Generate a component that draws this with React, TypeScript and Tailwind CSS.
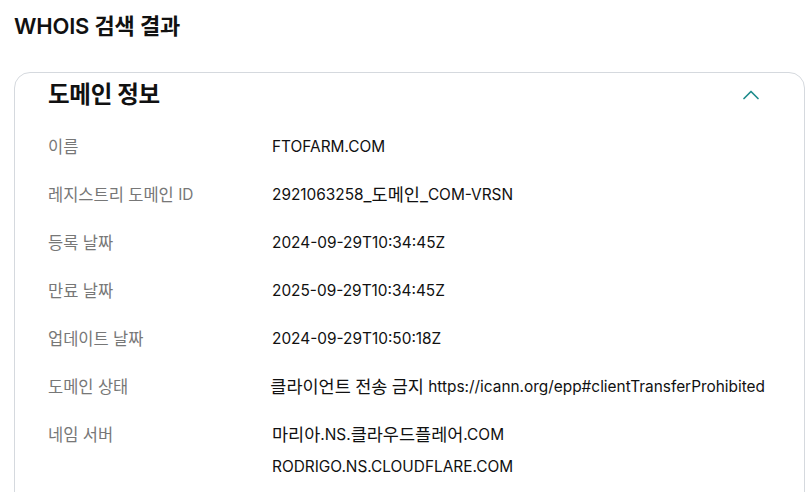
import { ChevronUp } from "lucide-react";

const rows: { label: string; values: string[] }[] = [
  { label: "이름", values: ["FTOFARM.COM"] },
  { label: "레지스트리 도메인 ID", values: ["2921063258_도메인_COM-VRSN"] },
  { label: "등록 날짜", values: ["2024-09-29T10:34:45Z"] },
  { label: "만료 날짜", values: ["2025-09-29T10:34:45Z"] },
  { label: "업데이트 날짜", values: ["2024-09-29T10:50:18Z"] },
  {
    label: "도메인 상태",
    values: ["클라이언트 전송 금지 https://icann.org/epp#clientTransferProhibited"],
  },
  {
    label: "네임 서버",
    values: ["마리아.NS.클라우드플레어.COM", "RODRIGO.NS.CLOUDFLARE.COM"],
  },
];

// hangul runs (and underscores) get a bigger size than the latin text around them
function Mixed({ text, big }: { text: string; big: string }) {
  return (
    <>
      {text.split(/([\u3131-\uD79D_]+)/).map((part, i) =>
        /[\u3131-\uD79D_]/.test(part) ? (
          <span key={i} className={big}>
            {part}
          </span>
        ) : (
          <span key={i}>{part}</span>
        )
      )}
    </>
  );
}

export default function App() {
  return (
    <div className="w-[811px] h-[492px] overflow-hidden bg-white font-['Inter','Noto_Sans_CJK_KR',sans-serif] text-[#111]">
      <h1 className="pl-[14px] pt-[11px] h-[40px] text-[22px] font-semibold leading-[30px] tracking-[-0.2px]">
        WHOIS 검색 결과
      </h1>

      <div className="mt-[32px] ml-[14px] mr-[6px] border border-[#d5d9de] rounded-[16px] pl-[33px] pr-[39px] pb-10">
        {/* Header */}
        <div className="h-[44px] flex items-center justify-between">
          <h2 className="text-[23.5px] font-bold tracking-[-0.3px]">도메인 정보</h2>
          <ChevronUp size={28} strokeWidth={1.5} className="text-[#1f8c8c]" />
        </div>

        {/* Rows */}
        <div className="mt-[6px]">
          {rows.map((row) => (
            <div key={row.label} className="flex py-2 text-[15.4px]">
              <div className="w-[224px] h-8 flex items-center text-[#777] whitespace-pre">
                <Mixed text={row.label} big="text-[16.5px]" />
              </div>
              <div className="flex flex-col">
                {row.values.map((v) => (
                  <div key={v} className="h-8 flex items-center text-[#111] whitespace-pre">
                    <Mixed text={v} big="text-[17.5px]" />
                  </div>
                ))}
              </div>
            </div>
          ))}
        </div>
      </div>
    </div>
  );
}
